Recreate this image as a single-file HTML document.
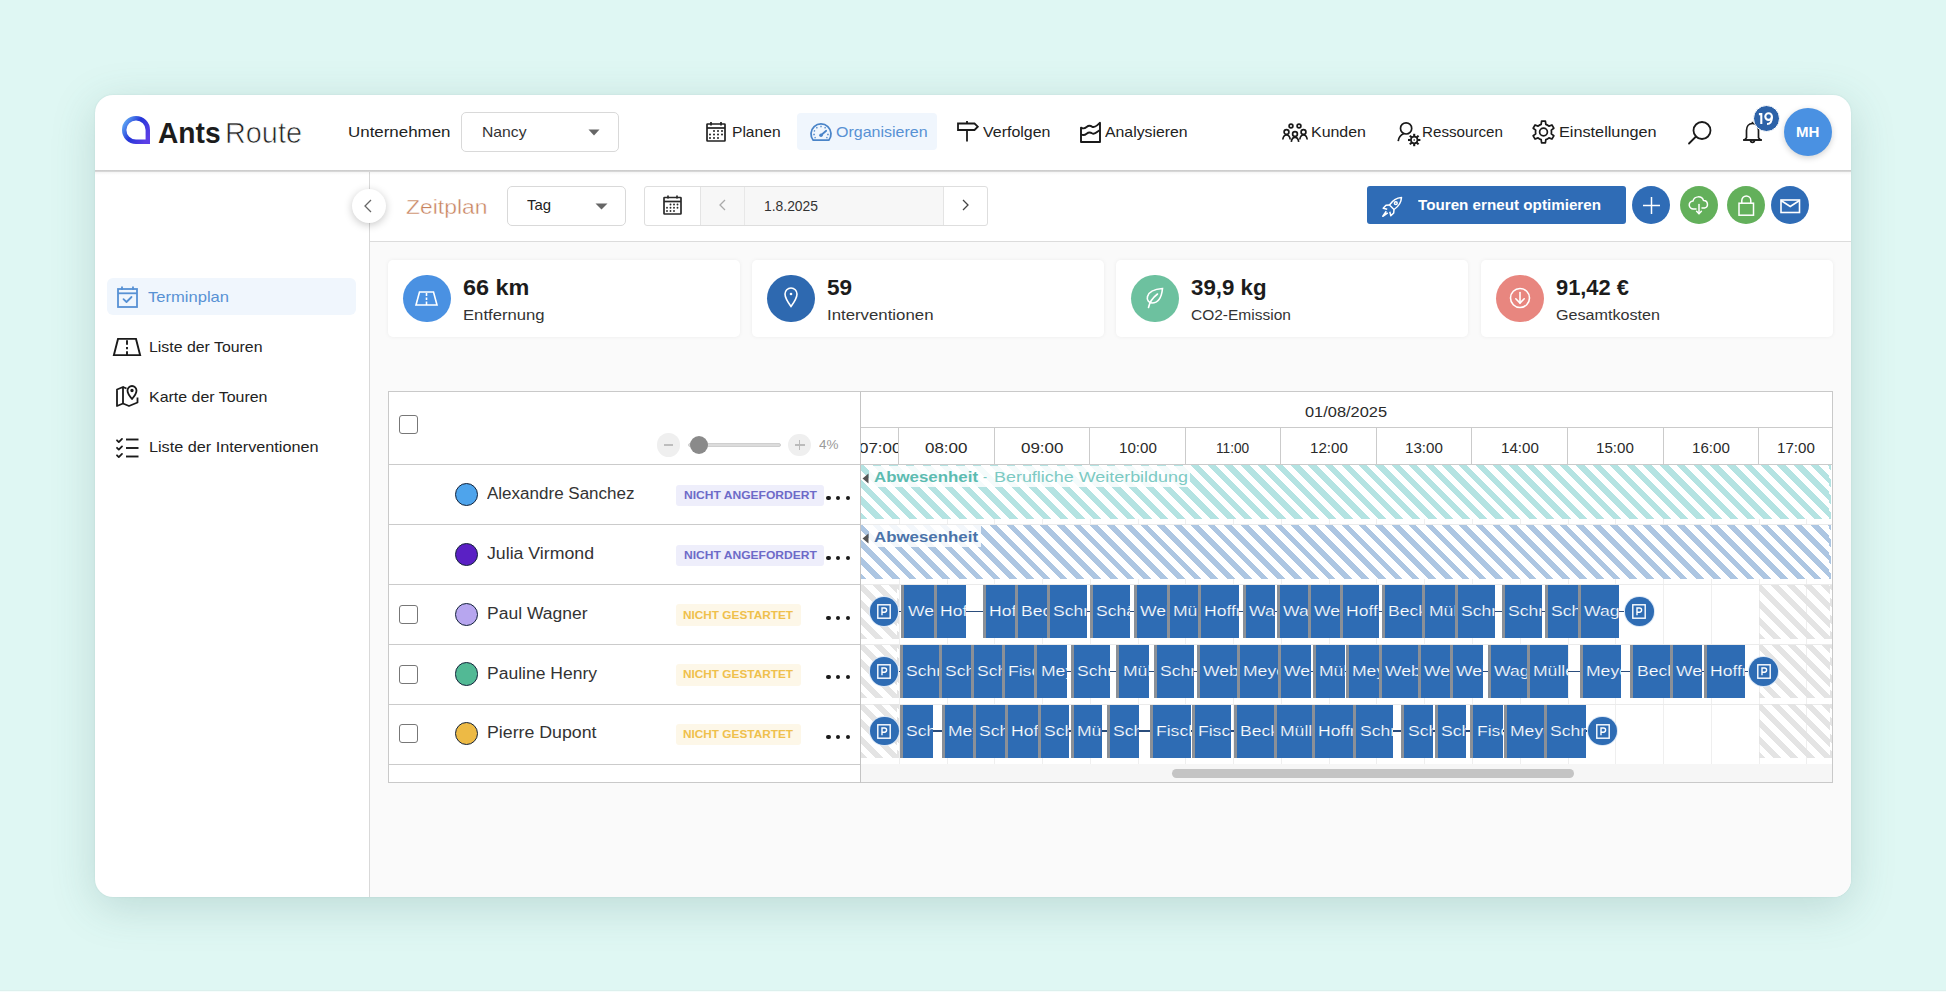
<!DOCTYPE html>
<html><head><meta charset="utf-8"><title>AntsRoute</title>
<style>
*{box-sizing:border-box;margin:0;padding:0}
html,body{width:1946px;height:992px;overflow:hidden}
body{background:#dff7f3;font-family:"Liberation Sans",sans-serif;color:#222;position:relative}
.a{position:absolute}
.t{position:absolute;white-space:nowrap;line-height:1;transform-origin:0 0}
svg.a{overflow:visible}
</style></head><body>

<div class="a" style="left:95px;top:95px;width:1756px;height:802px;background:#fff;border-radius:18px;box-shadow:0 10px 44px rgba(60,115,110,.21),0 0 2px rgba(60,115,110,.12);overflow:hidden"></div>
<div class="a" style="left:370px;top:170px;width:1481px;height:727px;background:#fafafa;border-bottom-right-radius:18px"></div>
<div class="a" style="left:369px;top:170px;width:1px;height:727px;background:#d9d9d9"></div>
<div class="a" style="left:370px;top:170px;width:1481px;height:72px;background:#fff;border-bottom:1px solid #dcdcdc"></div>
<div class="a" style="left:95px;top:170px;width:1756px;height:2px;background:linear-gradient(#c9c9c9,#dcdcdc)"></div>
<div class="a" style="left:95px;top:172px;width:1756px;height:3px;background:linear-gradient(rgba(0,0,0,.045),rgba(0,0,0,0))"></div>
<svg class="a" style="left:121px;top:115px;" width="30" height="30" viewBox="0 0 30 30"><defs><linearGradient id="lg" x1="0" y1="0.2" x2="1" y2="0.8">
<stop offset="0" stop-color="#5aa0f2"/><stop offset=".45" stop-color="#2536d8"/><stop offset="1" stop-color="#5b3fe6"/></linearGradient></defs>
<path d="M15 3.2a11.8 11.8 0 1 0 0 23.6h11.8V15A11.8 11.8 0 0 0 15 3.2z" fill="none" stroke="url(#lg)" stroke-width="4.4" stroke-linejoin="miter"/></svg>
<div class="t" style="left:158.0px;top:119.3px;font-size:29px;color:#1c1c1c;font-weight:bold;transform:scaleX(0.971);">Ants</div>
<div class="t" style="left:225.0px;top:119.3px;font-size:29px;color:#222;transform:scaleX(0.994);-webkit-text-stroke:0.7px #fff">Route</div>
<div class="t" style="left:348.0px;top:124.2px;font-size:15px;color:#222;transform:scaleX(1.128);">Unternehmen</div>
<div class="a" style="left:461px;top:112px;width:158px;height:40px;background:#fff;border:1px solid #d9d9d9;border-radius:5px"></div>
<div class="t" style="left:481.5px;top:124.2px;font-size:15px;color:#333;transform:scaleX(1.048);">Nancy</div>
<svg class="a" style="left:588px;top:129px;" width="12" height="7" viewBox="0 0 12 7"><path d="M0.5 0.5h11l-5.5 6z" fill="#666"/></svg>
<div class="a" style="left:797px;top:113px;width:140px;height:37px;background:#f0f6fd;border-radius:4px"></div>
<svg class="a" style="left:706px;top:121px;" width="20" height="21" viewBox="0 0 20 21"><g fill="none" stroke="#222" stroke-width="1.7"><rect x="1" y="3" width="18" height="17" rx="0.5"/><line x1="1" y1="7" x2="19" y2="7"/>
<line x1="5" y1="1" x2="5" y2="4.5"/><line x1="15" y1="1" x2="15" y2="4.5"/></g>
<g fill="#222"><circle cx="8" cy="10" r="1"/><circle cx="12" cy="10" r="1"/><circle cx="16" cy="10" r="1"/>
<circle cx="4" cy="13.5" r="1"/><circle cx="8" cy="13.5" r="1"/><circle cx="12" cy="13.5" r="1"/><circle cx="16" cy="13.5" r="1"/>
<circle cx="4" cy="17" r="1"/><circle cx="8" cy="17" r="1"/><circle cx="12" cy="17" r="1"/></g></svg>
<div class="t" style="left:732.0px;top:124.1px;font-size:15px;color:#222;transform:scaleX(1.040);">Planen</div>
<svg class="a" style="left:810px;top:122px;" width="22" height="20" viewBox="0 0 22 20"><g fill="none" stroke="#4a84c8" stroke-width="1.8"><path d="M3.2 18.2A10 10 0 1 1 18.8 18.2z" stroke-linejoin="round"/></g>
<g stroke="#4a84c8" stroke-width="1.3"><line x1="11" y1="3.8" x2="11" y2="5.3"/><line x1="6.5" y1="5.2" x2="7.3" y2="6.4"/><line x1="15.5" y1="5.2" x2="14.7" y2="6.4"/>
<line x1="3.8" y1="8.6" x2="5.1" y2="9.3"/><line x1="3.3" y1="12.5" x2="4.8" y2="12.5"/><line x1="17.2" y1="12.5" x2="18.7" y2="12.5"/><line x1="4.5" y1="16" x2="5.7" y2="15.4"/><line x1="17.5" y1="16" x2="16.3" y2="15.4"/></g>
<line x1="11" y1="13.2" x2="16.2" y2="8.8" stroke="#4a84c8" stroke-width="1.8" stroke-linecap="round"/><circle cx="11" cy="13.2" r="1.8" fill="#4a84c8"/></svg>
<div class="t" style="left:836.0px;top:124.1px;font-size:15px;color:#5791d4;transform:scaleX(1.066);">Organisieren</div>
<svg class="a" style="left:957px;top:121px;" width="22" height="21" viewBox="0 0 22 21"><g fill="none" stroke="#1a1a1a" stroke-width="1.8"><path d="M1 2.5h16.5l3.3 3.2-3.3 3.3H1z" stroke-linejoin="miter"/><line x1="10" y1="0" x2="10" y2="2.5"/><line x1="10" y1="9" x2="10" y2="20.5"/></g></svg>
<div class="t" style="left:982.5px;top:124.1px;font-size:15px;color:#222;transform:scaleX(1.064);">Verfolgen</div>
<svg class="a" style="left:1080px;top:122px;" width="22" height="21" viewBox="0 0 22 21"><g fill="none" stroke="#1a1a1a" stroke-width="1.9" stroke-linejoin="round"><path d="M1 5.6c2.2 1.4 3.8 0.9 5.6-0.6s3.4-1.8 5.4-0.4c2 1.2 3.4 0.2 5.4-1.5L20 0.8V20H1z"/>
<path d="M1 12.3c2.2 1.4 3.8 0.9 5.6-0.6s3.4-1.8 5.4-0.4c2 1.2 3.4 0.2 5.4-1.5L20 8"/></g></svg>
<div class="t" style="left:1105.0px;top:124.1px;font-size:15px;color:#222;transform:scaleX(1.054);">Analysieren</div>
<svg class="a" style="left:1282px;top:123px;" width="26" height="20" viewBox="0 0 26 20"><g fill="none" stroke="#1a1a1a" stroke-width="1.7"><circle cx="9" cy="3" r="1.9"/><circle cx="17" cy="3" r="1.9"/>
<circle cx="4.5" cy="9" r="2.4"/><circle cx="21.5" cy="9" r="2.4"/><circle cx="13" cy="11" r="2.4"/>
<path d="M0.8 16.5c0.4-3 2-4.5 3.7-4.5s3.3 1.5 3.7 4.5"/><path d="M17.8 16.5c0.4-3 2-4.5 3.7-4.5s3.3 1.5 3.7 4.5"/><path d="M9.3 18.8c0.4-3 2-4.5 3.7-4.5s3.3 1.5 3.7 4.5"/></g></svg>
<div class="t" style="left:1311.0px;top:123.8px;font-size:15px;color:#222;transform:scaleX(1.063);">Kunden</div>
<svg class="a" style="left:1397px;top:121px;" width="26" height="27" viewBox="0 0 26 27"><g fill="none" stroke="#1a1a1a" stroke-width="1.7"><circle cx="9.1" cy="7.4" r="5.6"/><path d="M1.2 20.1C1.8 16 3.5 13.8 6.6 12.7"/></g>
<g stroke="#1a1a1a" stroke-width="2.1"><line x1="20.60" y1="19.00" x2="23.40" y2="19.00"/><line x1="19.60" y1="21.40" x2="21.58" y2="23.38"/><line x1="17.20" y1="22.40" x2="17.20" y2="25.20"/><line x1="14.80" y1="21.40" x2="12.82" y2="23.38"/><line x1="13.80" y1="19.00" x2="11.00" y2="19.00"/><line x1="14.80" y1="16.60" x2="12.82" y2="14.62"/><line x1="17.20" y1="15.60" x2="17.20" y2="12.80"/><line x1="19.60" y1="16.60" x2="21.58" y2="14.62"/></g><circle cx="17.2" cy="19" r="3.3" fill="#fff" stroke="#1a1a1a" stroke-width="1.7"/><circle cx="17.2" cy="19" r="0.8" fill="#1a1a1a"/></svg>
<div class="t" style="left:1422.0px;top:123.8px;font-size:15px;color:#222;transform:scaleX(1.011);">Ressourcen</div>
<svg class="a" style="left:1531px;top:119px;" width="25" height="26" viewBox="0 0 25 26"><g fill="none" stroke="#1a1a1a" stroke-width="1.7" stroke-linejoin="round"><path d="M10.16 5.35L10.59 2.17L14.41 2.17L14.84 5.35A8.0 8.0 0 0 1 17.96 7.15L20.93 5.93L22.84 9.24L20.29 11.20A8.0 8.0 0 0 1 20.29 14.80L22.84 16.76L20.93 20.07L17.96 18.85A8.0 8.0 0 0 1 14.84 20.65L14.41 23.83L10.59 23.83L10.16 20.65A8.0 8.0 0 0 1 7.04 18.85L4.07 20.07L2.16 16.76L4.71 14.80A8.0 8.0 0 0 1 4.71 11.20L2.16 9.24L4.07 5.93L7.04 7.15A8.0 8.0 0 0 1 10.16 5.35z"/><circle cx="12.5" cy="13" r="3.9"/></g></svg>
<div class="t" style="left:1559.0px;top:124.2px;font-size:15px;color:#222;transform:scaleX(1.083);">Einstellungen</div>
<svg class="a" style="left:1688px;top:121px;" width="24" height="24" viewBox="0 0 24 24"><g fill="none" stroke="#1a1a1a" stroke-width="1.8"><circle cx="14" cy="9.5" r="8.5"/><line x1="8" y1="15.5" x2="1" y2="22.5" stroke-linecap="round"/></g></svg>
<svg class="a" style="left:1742px;top:121px;" width="21" height="24" viewBox="0 0 21 24"><g fill="none" stroke="#1a1a1a" stroke-width="1.7" stroke-linejoin="round"><path d="M10.5 2.5c-3.8 0-6 3-6 7v7.2L2.5 19h16l-2-2.3V9.5c0-4-2.2-7-6-7z"/><path d="M1 19h19"/><path d="M8.6 19.5a1.9 1.9 0 0 0 3.8 0"/><line x1="10.5" y1="0.8" x2="10.5" y2="2.5"/></g></svg>
<div class="a" style="left:1752.5px;top:104.8px;width:27px;height:27px;border-radius:50%;background:#2d62a8;border:1.5px solid #fff"></div>
<svg class="a" style="left:1758px;top:111.5px;" width="16" height="13" viewBox="0 0 16 13"><g fill="none" stroke="#fff" stroke-width="2.1"><path d="M0.9 2.1H3.3V12"/><circle cx="10.6" cy="4.6" r="3.3"/><path d="M13.9 4.8C13.9 9.8 12.4 12 9 12"/></g></svg>
<div class="a" style="left:1784px;top:108px;width:48px;height:48px;border-radius:50%;background:#4a91e2;box-shadow:0 2px 6px rgba(0,0,0,.18)"></div>
<div class="t" style="left:1796.0px;top:125.3px;font-size:14px;color:#fff;font-weight:bold;transform:scaleX(1.076);">MH</div>
<div class="a" style="left:107px;top:278px;width:249px;height:37px;background:#f0f6fd;border-radius:6px"></div>
<svg class="a" style="left:117px;top:286px;" width="21" height="22" viewBox="0 0 21 22"><g fill="none" stroke="#5791d4" stroke-width="1.8"><rect x="1" y="3" width="19" height="18"/><line x1="1" y1="7.3" x2="20" y2="7.3"/><line x1="5" y1="0.5" x2="5" y2="4"/><line x1="16" y1="0.5" x2="16" y2="4"/>
<path d="M6.5 13.2l3 2.8 5-5" stroke-linecap="round" stroke-linejoin="round"/></g></svg>
<div class="t" style="left:148.0px;top:289.2px;font-size:15px;color:#5791d4;transform:scaleX(1.104);">Terminplan</div>
<svg class="a" style="left:113px;top:338px;" width="28" height="18" viewBox="0 0 28 18"><g fill="none" stroke="#1a1a1a" stroke-width="1.9" stroke-linejoin="miter"><path d="M5.0 0.9H23.0L27.1 17.1H0.9z"/>
<line x1="14.0" y1="2.2" x2="14.0" y2="6.8"/><line x1="14.0" y1="9.0" x2="14.0" y2="11.2"/><line x1="14.0" y1="13.3" x2="14.0" y2="18.0"/></g></svg>
<div class="t" style="left:148.5px;top:339.2px;font-size:15px;color:#222;transform:scaleX(1.058);">Liste der Touren</div>
<svg class="a" style="left:116px;top:385px;" width="23" height="22" viewBox="0 0 23 22"><g fill="none" stroke="#1a1a1a" stroke-width="1.8" stroke-linejoin="round"><path d="M1 4.5l6-2.5v16.5l-6 2.5z"/><path d="M7 2l3.5 1.5"/><path d="M7 18.5l6 2.5 8.5-3.5v-5"/>
<path d="M16 1a4.5 4.5 0 0 0-4.5 4.5c0 3.2 4.5 8.5 4.5 8.5s4.5-5.3 4.5-8.5A4.5 4.5 0 0 0 16 1z"/><circle cx="16" cy="5.5" r="0.8" fill="#1a1a1a"/></g></svg>
<div class="t" style="left:148.5px;top:388.8px;font-size:15px;color:#222;transform:scaleX(1.063);">Karte der Touren</div>
<svg class="a" style="left:116px;top:438px;" width="23" height="20" viewBox="0 0 23 20"><g fill="none" stroke="#1a1a1a" stroke-width="1.8" stroke-linecap="round" stroke-linejoin="round"><path d="M1 2.3l1.8 1.8 3.2-3.2"/><path d="M1 9.8l1.8 1.8 3.2-3.2"/><path d="M1 17.3l1.8 1.8 3.2-3.2"/></g>
<g stroke="#1a1a1a" stroke-width="1.9"><line x1="10" y1="1.5" x2="22.5" y2="1.5"/><line x1="10" y1="10" x2="22.5" y2="10"/><line x1="10" y1="18.5" x2="22.5" y2="18.5"/></g></svg>
<div class="t" style="left:148.5px;top:438.8px;font-size:15px;color:#222;transform:scaleX(1.081);">Liste der Interventionen</div>
<div class="a" style="left:352px;top:189px;width:34px;height:34px;border-radius:50%;background:#fff;box-shadow:0 2px 9px rgba(0,0,0,.22)"></div>
<svg class="a" style="left:363px;top:199px;" width="10" height="14" viewBox="0 0 10 14"><path d="M8 1L2 7l6 6" fill="none" stroke="#666" stroke-width="1.3"/></svg>
<div class="t" style="left:406.0px;top:196.2px;font-size:21px;color:#c7825d;transform:scaleX(1.090);-webkit-text-stroke:0.4px #fff">Zeitplan</div>
<div class="a" style="left:507px;top:186px;width:119px;height:40px;background:#fff;border:1px solid #d9d9d9;border-radius:5px"></div>
<div class="t" style="left:526.5px;top:197.2px;font-size:15px;color:#222;transform:scaleX(0.994);">Tag</div>
<svg class="a" style="left:595px;top:203px;" width="13" height="7" viewBox="0 0 13 7"><path d="M0.5 0.5h12l-6 6z" fill="#666"/></svg>
<div class="a" style="left:644px;top:186px;width:344px;height:40px;background:#fff;border:1px solid #dedede;border-radius:3px"></div>
<div class="a" style="left:701px;top:187px;width:242px;height:38px;background:#f7f7f7"></div>
<div class="a" style="left:700px;top:187px;width:1px;height:38px;background:#e4e4e4"></div>
<div class="a" style="left:744px;top:187px;width:1px;height:38px;background:#e8e8e8"></div>
<div class="a" style="left:943px;top:187px;width:1px;height:38px;background:#e4e4e4"></div>
<svg class="a" style="left:663px;top:195px;" width="19" height="20" viewBox="0 0 19 20"><g fill="none" stroke="#2a2a2a" stroke-width="1.7"><rect x="1" y="2.5" width="17" height="16.5" rx="0.5"/><line x1="1" y1="6.5" x2="18" y2="6.5"/><line x1="5" y1="0.5" x2="5" y2="3.5"/><line x1="14" y1="0.5" x2="14" y2="3.5"/></g>
<g fill="#2a2a2a"><circle cx="7.5" cy="9.5" r=".95"/><circle cx="11" cy="9.5" r=".95"/><circle cx="14.5" cy="9.5" r=".95"/><circle cx="4" cy="12.8" r=".95"/><circle cx="7.5" cy="12.8" r=".95"/><circle cx="11" cy="12.8" r=".95"/><circle cx="14.5" cy="12.8" r=".95"/><circle cx="4" cy="16" r=".95"/><circle cx="7.5" cy="16" r=".95"/><circle cx="11" cy="16" r=".95"/></g></svg>
<svg class="a" style="left:718px;top:199px;" width="9" height="12" viewBox="0 0 9 12"><path d="M7 1L2 6l5 5" fill="none" stroke="#aaa" stroke-width="1.3"/></svg>
<div class="t" style="left:764.0px;top:197.8px;font-size:15px;color:#333;transform:scaleX(0.925);">1.8.2025</div>
<svg class="a" style="left:961px;top:199px;" width="9" height="12" viewBox="0 0 9 12"><path d="M2 1l5 5-5 5" fill="none" stroke="#444" stroke-width="1.3"/></svg>
<div class="a" style="left:1367px;top:186px;width:259px;height:38px;background:#2f6cb6;border-radius:3px"></div>
<svg class="a" style="left:1381px;top:196px;" width="22" height="22" viewBox="0 0 22 22"><g fill="none" stroke="#fff" stroke-width="1.5" stroke-linejoin="round"><path d="M20.5 1.5c-5 0.3-9 3-12 7.5l4.5 4.5c4.5-3 7.2-7 7.5-12z"/><circle cx="14.8" cy="7.2" r="1.4"/>
<path d="M8.5 9L5 9.3 2.2 12.2l4 1"/><path d="M13 13.5L12.7 17 9.8 19.8l-1-4"/><path d="M5.3 15.3l-3.5 5 5-3.5"/></g></svg>
<div class="t" style="left:1418.0px;top:198.3px;font-size:14px;color:#fff;font-weight:bold;transform:scaleX(1.086);">Touren erneut optimieren</div>
<div class="a" style="left:1632.3px;top:186.4px;width:38px;height:38px;border-radius:50%;background:#2f6cb6;"></div>
<svg class="a" style="left:1642px;top:196px;" width="19" height="19" viewBox="0 0 19 19"><g stroke="#fff" stroke-width="1.5"><line x1="1" y1="9.5" x2="18" y2="9.5"/><line x1="9.5" y1="1" x2="9.5" y2="18"/></g></svg>
<div class="a" style="left:1679.8px;top:186.4px;width:38px;height:38px;border-radius:50%;background:#63b05b;"></div>
<svg class="a" style="left:1688px;top:196px;" width="22" height="20" viewBox="0 0 22 20"><g fill="none" stroke="#fff" stroke-width="1.5" stroke-linejoin="round" stroke-linecap="round"><path d="M8 13H5.5a4 4 0 0 1-0.5-8a5.5 5.5 0 0 1 10.5-0.5a3.8 3.8 0 0 1 1 7.5 H14"/>
<line x1="11" y1="8.5" x2="11" y2="17.5"/><path d="M8.6 15.3l2.4 2.4 2.4-2.4"/></g></svg>
<div class="a" style="left:1727.0px;top:186.4px;width:38px;height:38px;border-radius:50%;background:#63b05b;"></div>
<svg class="a" style="left:1738px;top:195px;" width="17" height="22" viewBox="0 0 17 22"><g fill="none" stroke="#fff" stroke-width="1.5"><rect x="1" y="8.2" width="14.5" height="12"/><path d="M3.8 8.2V5.5a4.5 4.5 0 0 1 9 0v2.7"/></g></svg>
<div class="a" style="left:1771.0px;top:186.4px;width:38px;height:38px;border-radius:50%;background:#2f6cb6;"></div>
<svg class="a" style="left:1780px;top:199px;" width="21" height="15" viewBox="0 0 21 15"><g fill="none" stroke="#fff" stroke-width="1.6"><rect x="1" y="1" width="18.5" height="12.5"/><path d="M1 1.5l9.25 6 9.25-6"/></g></svg>
<div class="a" style="left:388px;top:260px;width:352px;height:77px;background:#fff;border-radius:5px;box-shadow:0 0 4px rgba(0,0,0,.06)"></div>
<div class="a" style="left:403.1px;top:274.6px;width:47.5px;height:47.5px;border-radius:50%;background:#4a91e2;"></div>
<svg class="a" style="left:415.4px;top:290.9px;" width="23" height="15" viewBox="0 0 23 15"><g fill="none" stroke="#fff" stroke-width="1.6"><path d="M4.5 1h14l3.5 13H1z"/><line x1="11.5" y1="2" x2="11.5" y2="5"/><line x1="11.5" y1="6.5" x2="11.5" y2="9"/><line x1="11.5" y1="10.5" x2="11.5" y2="14"/></g></svg>
<div class="t" style="left:462.5px;top:277.1px;font-size:22px;color:#1c1c1c;font-weight:bold;transform:scaleX(1.064);">66 km</div>
<div class="t" style="left:462.8px;top:307.6px;font-size:14px;color:#333;transform:scaleX(1.190);">Entfernung</div>
<div class="a" style="left:752px;top:260px;width:352px;height:77px;background:#fff;border-radius:5px;box-shadow:0 0 4px rgba(0,0,0,.06)"></div>
<div class="a" style="left:767.1px;top:274.6px;width:47.5px;height:47.5px;border-radius:50%;background:#2e69b0;"></div>
<svg class="a" style="left:783.9px;top:287.4px;" width="14" height="21" viewBox="0 0 14 21"><g fill="none" stroke="#fff" stroke-width="1.6"><path d="M7 1a6 6 0 0 0-6 6c0 4.3 6 12.5 6 12.5s6-8.2 6-12.5a6 6 0 0 0-6-6z"/><circle cx="7" cy="7" r="1.3" fill="#fff" stroke="none"/></g></svg>
<div class="t" style="left:826.5px;top:277.1px;font-size:22px;color:#1c1c1c;font-weight:bold;transform:scaleX(1.024);">59</div>
<div class="t" style="left:826.8px;top:307.6px;font-size:14px;color:#333;transform:scaleX(1.200);">Interventionen</div>
<div class="a" style="left:1116px;top:260px;width:352px;height:77px;background:#fff;border-radius:5px;box-shadow:0 0 4px rgba(0,0,0,.06)"></div>
<div class="a" style="left:1131.2px;top:274.6px;width:47.5px;height:47.5px;border-radius:50%;background:#6dc19f;"></div>
<svg class="a" style="left:1144.4px;top:287.4px;" width="21" height="22" viewBox="0 0 21 22"><g fill="none" stroke="#fff" stroke-width="1.6" stroke-linecap="round"><path d="M18.5 1.5C12 2 5 4 3.5 9.5c-1 3.5 1.5 6.5 4.5 6.5 5.5 0 9.5-4.5 10.5-14.5z"/><path d="M13.5 7C9 10.5 5.5 15 4.5 20.5"/></g></svg>
<div class="t" style="left:1190.5px;top:277.1px;font-size:22px;color:#1c1c1c;font-weight:bold;transform:scaleX(1.012);">39,9 kg</div>
<div class="t" style="left:1190.8px;top:307.6px;font-size:14px;color:#333;transform:scaleX(1.107);">CO2-Emission</div>
<div class="a" style="left:1481px;top:260px;width:352px;height:77px;background:#fff;border-radius:5px;box-shadow:0 0 4px rgba(0,0,0,.06)"></div>
<div class="a" style="left:1496.2px;top:274.6px;width:47.5px;height:47.5px;border-radius:50%;background:#e8867f;"></div>
<svg class="a" style="left:1508.9px;top:287.4px;" width="22" height="22" viewBox="0 0 22 22"><g fill="none" stroke="#fff" stroke-width="1.6" stroke-linecap="round"><circle cx="11" cy="11" r="9.5"/><line x1="11" y1="5.5" x2="11" y2="16"/><path d="M6.8 11.8L11 16l4.2-4.2"/></g></svg>
<div class="t" style="left:1555.5px;top:277.1px;font-size:22px;color:#1c1c1c;font-weight:bold;transform:scaleX(0.993);">91,42 €</div>
<div class="t" style="left:1555.8px;top:307.6px;font-size:14px;color:#333;transform:scaleX(1.152);">Gesamtkosten</div>
<div class="a" style="left:388px;top:391px;width:1445px;height:392px;background:#fff;border:1px solid #c9c9c9"></div>
<div class="a" style="left:898.7px;top:464.5px;width:1px;height:299.0px;background:#efefef"></div>
<div class="a" style="left:946.5px;top:464.5px;width:1px;height:299.0px;background:#efefef"></div>
<div class="a" style="left:994.2px;top:464.5px;width:1px;height:299.0px;background:#efefef"></div>
<div class="a" style="left:1042.0px;top:464.5px;width:1px;height:299.0px;background:#efefef"></div>
<div class="a" style="left:1089.8px;top:464.5px;width:1px;height:299.0px;background:#efefef"></div>
<div class="a" style="left:1137.6px;top:464.5px;width:1px;height:299.0px;background:#efefef"></div>
<div class="a" style="left:1185.3px;top:464.5px;width:1px;height:299.0px;background:#efefef"></div>
<div class="a" style="left:1233.1px;top:464.5px;width:1px;height:299.0px;background:#efefef"></div>
<div class="a" style="left:1280.9px;top:464.5px;width:1px;height:299.0px;background:#efefef"></div>
<div class="a" style="left:1328.6px;top:464.5px;width:1px;height:299.0px;background:#efefef"></div>
<div class="a" style="left:1376.4px;top:464.5px;width:1px;height:299.0px;background:#efefef"></div>
<div class="a" style="left:1424.2px;top:464.5px;width:1px;height:299.0px;background:#efefef"></div>
<div class="a" style="left:1471.9px;top:464.5px;width:1px;height:299.0px;background:#efefef"></div>
<div class="a" style="left:1519.7px;top:464.5px;width:1px;height:299.0px;background:#efefef"></div>
<div class="a" style="left:1567.5px;top:464.5px;width:1px;height:299.0px;background:#efefef"></div>
<div class="a" style="left:1615.2px;top:464.5px;width:1px;height:299.0px;background:#efefef"></div>
<div class="a" style="left:1663.0px;top:464.5px;width:1px;height:299.0px;background:#efefef"></div>
<div class="a" style="left:1710.8px;top:464.5px;width:1px;height:299.0px;background:#efefef"></div>
<div class="a" style="left:1758.6px;top:464.5px;width:1px;height:299.0px;background:#efefef"></div>
<div class="a" style="left:1806.3px;top:464.5px;width:1px;height:299.0px;background:#efefef"></div>
<div class="a" style="left:860.3px;top:524.3px;width:972.2px;height:1px;background:#ebebeb"></div>
<div class="a" style="left:860.3px;top:584.2px;width:972.2px;height:1px;background:#ebebeb"></div>
<div class="a" style="left:860.3px;top:643.8px;width:972.2px;height:1px;background:#ebebeb"></div>
<div class="a" style="left:860.3px;top:703.5px;width:972.2px;height:1px;background:#ebebeb"></div>
<div class="a" style="left:860.3px;top:763.5px;width:972.2px;height:1px;background:#ebebeb"></div>
<div class="a" style="left:388.5px;top:524.3px;width:471.79999999999995px;height:1px;background:#cbcbcb"></div>
<div class="a" style="left:388.5px;top:584.2px;width:471.79999999999995px;height:1px;background:#cbcbcb"></div>
<div class="a" style="left:388.5px;top:643.8px;width:471.79999999999995px;height:1px;background:#cbcbcb"></div>
<div class="a" style="left:388.5px;top:703.5px;width:471.79999999999995px;height:1px;background:#cbcbcb"></div>
<div class="a" style="left:388.5px;top:763.5px;width:471.79999999999995px;height:1px;background:#cbcbcb"></div>
<div class="a" style="left:860.3px;top:427px;width:972.2px;height:1px;background:#cbcbcb"></div>
<div class="a" style="left:388.5px;top:464px;width:1444.0px;height:1px;background:#cbcbcb"></div>
<div class="a" style="left:860px;top:391.5px;width:1px;height:391px;background:#c4c4c4"></div>
<div class="a" style="left:898.2px;top:427.5px;width:1px;height:37px;background:#cbcbcb"></div>
<div class="a" style="left:993.7px;top:427.5px;width:1px;height:37px;background:#cbcbcb"></div>
<div class="a" style="left:1089.3px;top:427.5px;width:1px;height:37px;background:#cbcbcb"></div>
<div class="a" style="left:1184.8px;top:427.5px;width:1px;height:37px;background:#cbcbcb"></div>
<div class="a" style="left:1280.4px;top:427.5px;width:1px;height:37px;background:#cbcbcb"></div>
<div class="a" style="left:1375.9px;top:427.5px;width:1px;height:37px;background:#cbcbcb"></div>
<div class="a" style="left:1471.4px;top:427.5px;width:1px;height:37px;background:#cbcbcb"></div>
<div class="a" style="left:1567.0px;top:427.5px;width:1px;height:37px;background:#cbcbcb"></div>
<div class="a" style="left:1662.5px;top:427.5px;width:1px;height:37px;background:#cbcbcb"></div>
<div class="a" style="left:1758.1px;top:427.5px;width:1px;height:37px;background:#cbcbcb"></div>
<div class="a" style="left:860.8px;top:428px;width:37.4px;height:36px;overflow:hidden"><div class="t" style="left:-2.2px;top:11.9px;font-size:15px;color:#2a2a2a;transform:scaleX(1.131)">07:00</div></div>
<div class="a" style="left:898.7px;top:428px;width:95.0px;height:36px;overflow:hidden"><div class="t" style="left:26.6px;top:11.9px;font-size:15px;color:#2a2a2a;transform:scaleX(1.131)">08:00</div></div>
<div class="a" style="left:994.2px;top:428px;width:95.0px;height:36px;overflow:hidden"><div class="t" style="left:26.6px;top:11.9px;font-size:15px;color:#2a2a2a;transform:scaleX(1.131)">09:00</div></div>
<div class="a" style="left:1089.8px;top:428px;width:95.0px;height:36px;overflow:hidden"><div class="t" style="left:28.9px;top:11.9px;font-size:15px;color:#2a2a2a;transform:scaleX(1.008)">10:00</div></div>
<div class="a" style="left:1185.3px;top:428px;width:95.0px;height:36px;overflow:hidden"><div class="t" style="left:31.2px;top:11.9px;font-size:15px;color:#2a2a2a;transform:scaleX(0.911)">11:00</div></div>
<div class="a" style="left:1280.9px;top:428px;width:95.0px;height:36px;overflow:hidden"><div class="t" style="left:28.9px;top:11.9px;font-size:15px;color:#2a2a2a;transform:scaleX(1.008)">12:00</div></div>
<div class="a" style="left:1376.4px;top:428px;width:95.0px;height:36px;overflow:hidden"><div class="t" style="left:28.9px;top:11.9px;font-size:15px;color:#2a2a2a;transform:scaleX(1.008)">13:00</div></div>
<div class="a" style="left:1471.9px;top:428px;width:95.0px;height:36px;overflow:hidden"><div class="t" style="left:28.9px;top:11.9px;font-size:15px;color:#2a2a2a;transform:scaleX(1.008)">14:00</div></div>
<div class="a" style="left:1567.5px;top:428px;width:95.0px;height:36px;overflow:hidden"><div class="t" style="left:28.9px;top:11.9px;font-size:15px;color:#2a2a2a;transform:scaleX(1.008)">15:00</div></div>
<div class="a" style="left:1663.0px;top:428px;width:95.0px;height:36px;overflow:hidden"><div class="t" style="left:28.9px;top:11.9px;font-size:15px;color:#2a2a2a;transform:scaleX(1.008)">16:00</div></div>
<div class="a" style="left:1758.6px;top:428px;width:73.4px;height:36px;overflow:hidden"><div class="t" style="left:18.1px;top:11.9px;font-size:15px;color:#2a2a2a;transform:scaleX(1.008)">17:00</div></div>
<div class="t" style="left:1305.0px;top:403.9px;font-size:15px;color:#2a2a2a;transform:scaleX(1.093);">01/08/2025</div>
<div class="a" style="left:398.5px;top:415px;width:19px;height:19px;border:1.6px solid #777;border-radius:3px;background:#fff"></div>
<div class="a" style="left:656.5px;top:433.2px;width:23.5px;height:23.5px;border-radius:50%;background:#efefef;"></div>
<div class="a" style="left:664px;top:444.3px;width:9px;height:1.4px;background:#bdbdbd"></div>
<div class="a" style="left:687.5px;top:443.3px;width:93.5px;height:4px;background:#dcdcdc;border-radius:2px;border:0.5px solid #cfcfcf"></div>
<div class="a" style="left:689.5px;top:435.8px;width:18.5px;height:18.5px;border-radius:50%;background:#8a8a8a;"></div>
<div class="a" style="left:788.2px;top:433.8px;width:22.5px;height:22.5px;border-radius:50%;background:#efefef;"></div>
<div class="a" style="left:794.5px;top:444.3px;width:10px;height:1.3px;background:#bbb"></div>
<div class="a" style="left:798.8px;top:439.5px;width:1.3px;height:10px;background:#bbb"></div>
<div class="t" style="left:818.5px;top:438.4px;font-size:13px;color:#9a9a9a;transform:scaleX(1.034);">4%</div>
<div class="a" style="left:454.8px;top:482.9px;width:23.6px;height:23.6px;border-radius:50%;background:#4ea4ec;border:1.6px solid #14233a"></div>
<div class="t" style="left:487.2px;top:486.3px;font-size:16px;color:#333;transform:scaleX(1.063);">Alexandre Sanchez</div>
<div class="a" style="left:676px;top:484.8px;width:148px;height:21.5px;background:#eeeefb;border-radius:3px"></div>
<div class="t" style="left:683.5px;top:490.0px;font-size:11.5px;color:#6d6ac8;font-weight:bold;transform:scaleX(1.049);">NICHT ANGEFORDERT</div>
<div class="a" style="left:826.4px;top:496.2px;width:4.2px;height:4.2px;border-radius:50%;background:#1a1a1a;"></div>
<div class="a" style="left:836.1px;top:496.2px;width:4.2px;height:4.2px;border-radius:50%;background:#1a1a1a;"></div>
<div class="a" style="left:845.8px;top:496.2px;width:4.2px;height:4.2px;border-radius:50%;background:#1a1a1a;"></div>
<div class="a" style="left:454.8px;top:542.7px;width:23.6px;height:23.6px;border-radius:50%;background:#5a20c4;border:1.6px solid #14233a"></div>
<div class="t" style="left:487.2px;top:546.1px;font-size:16px;color:#333;transform:scaleX(1.107);">Julia Virmond</div>
<div class="a" style="left:676px;top:544.5999999999999px;width:148px;height:21.5px;background:#eeeefb;border-radius:3px"></div>
<div class="t" style="left:683.5px;top:549.8px;font-size:11.5px;color:#6d6ac8;font-weight:bold;transform:scaleX(1.049);">NICHT ANGEFORDERT</div>
<div class="a" style="left:826.4px;top:556.0px;width:4.2px;height:4.2px;border-radius:50%;background:#1a1a1a;"></div>
<div class="a" style="left:836.1px;top:556.0px;width:4.2px;height:4.2px;border-radius:50%;background:#1a1a1a;"></div>
<div class="a" style="left:845.8px;top:556.0px;width:4.2px;height:4.2px;border-radius:50%;background:#1a1a1a;"></div>
<div class="a" style="left:398.5px;top:605.1000000000001px;width:19px;height:19px;border:1.6px solid #777;border-radius:3px;background:#fff"></div>
<div class="a" style="left:454.8px;top:602.6px;width:23.6px;height:23.6px;border-radius:50%;background:#b7a6ef;border:1.6px solid #14233a"></div>
<div class="t" style="left:487.2px;top:606.0px;font-size:16px;color:#333;transform:scaleX(1.094);">Paul Wagner</div>
<div class="a" style="left:675.5px;top:604.4000000000001px;width:125px;height:21.8px;background:#fdf7e8;border-radius:3px"></div>
<div class="t" style="left:683.2px;top:609.7px;font-size:11.5px;color:#efc04c;font-weight:bold;transform:scaleX(1.027);">NICHT GESTARTET</div>
<div class="a" style="left:826.4px;top:615.7px;width:4.2px;height:4.2px;border-radius:50%;background:#1a1a1a;"></div>
<div class="a" style="left:836.1px;top:615.7px;width:4.2px;height:4.2px;border-radius:50%;background:#1a1a1a;"></div>
<div class="a" style="left:845.8px;top:615.7px;width:4.2px;height:4.2px;border-radius:50%;background:#1a1a1a;"></div>
<div class="a" style="left:398.5px;top:664.7px;width:19px;height:19px;border:1.6px solid #777;border-radius:3px;background:#fff"></div>
<div class="a" style="left:454.8px;top:662.2px;width:23.6px;height:23.6px;border-radius:50%;background:#52b995;border:1.6px solid #14233a"></div>
<div class="t" style="left:487.2px;top:665.6px;font-size:16px;color:#333;transform:scaleX(1.095);">Pauline Henry</div>
<div class="a" style="left:675.5px;top:664.0px;width:125px;height:21.8px;background:#fdf7e8;border-radius:3px"></div>
<div class="t" style="left:683.2px;top:669.3px;font-size:11.5px;color:#efc04c;font-weight:bold;transform:scaleX(1.027);">NICHT GESTARTET</div>
<div class="a" style="left:826.4px;top:675.3px;width:4.2px;height:4.2px;border-radius:50%;background:#1a1a1a;"></div>
<div class="a" style="left:836.1px;top:675.3px;width:4.2px;height:4.2px;border-radius:50%;background:#1a1a1a;"></div>
<div class="a" style="left:845.8px;top:675.3px;width:4.2px;height:4.2px;border-radius:50%;background:#1a1a1a;"></div>
<div class="a" style="left:398.5px;top:724.4000000000001px;width:19px;height:19px;border:1.6px solid #777;border-radius:3px;background:#fff"></div>
<div class="a" style="left:454.8px;top:721.9px;width:23.6px;height:23.6px;border-radius:50%;background:#edba45;border:1.6px solid #14233a"></div>
<div class="t" style="left:487.2px;top:725.3px;font-size:16px;color:#333;transform:scaleX(1.109);">Pierre Dupont</div>
<div class="a" style="left:675.5px;top:723.7px;width:125px;height:21.8px;background:#fdf7e8;border-radius:3px"></div>
<div class="t" style="left:683.2px;top:729.0px;font-size:11.5px;color:#efc04c;font-weight:bold;transform:scaleX(1.027);">NICHT GESTARTET</div>
<div class="a" style="left:826.4px;top:735.0px;width:4.2px;height:4.2px;border-radius:50%;background:#1a1a1a;"></div>
<div class="a" style="left:836.1px;top:735.0px;width:4.2px;height:4.2px;border-radius:50%;background:#1a1a1a;"></div>
<div class="a" style="left:845.8px;top:735.0px;width:4.2px;height:4.2px;border-radius:50%;background:#1a1a1a;"></div>
<div class="a" style="left:861.0px;top:465.3px;width:969.5px;height:54.0px;background:repeating-linear-gradient(45deg,#b4e3e2 0 5.9px,#fff 5.9px 11.85px);background-position:-2px 0;"></div>
<div class="a" style="left:861.0px;top:525.1px;width:969.5px;height:54.0px;background:repeating-linear-gradient(45deg,#adc6e2 0 5.4px,#fff 5.4px 11.85px);background-position:-2px 0;"></div>
<div class="a" style="left:869px;top:465.5px;width:321px;height:21.5px;background:rgba(255,255,255,.85)"></div>
<div class="a" style="left:869px;top:525.3px;width:112px;height:21.5px;background:rgba(255,255,255,.85)"></div>
<svg class="a" style="left:862px;top:473.0px;" width="7" height="11" viewBox="0 0 7 11"><path d="M6.5 0.5v10L0.5 5.5z" fill="#555"/></svg>
<svg class="a" style="left:862px;top:532.8px;" width="7" height="11" viewBox="0 0 7 11"><path d="M6.5 0.5v10L0.5 5.5z" fill="#555"/></svg>
<div class="t" style="left:873.6px;top:468.9px;font-size:15px;color:#5cbbb1;font-weight:bold;transform:scaleX(1.124);">Abwesenheit</div>
<div class="t" style="left:983.0px;top:468.9px;font-size:15px;color:#7ccac3;transform:scaleX(0.808);">-</div>
<div class="t" style="left:993.7px;top:468.9px;font-size:15px;color:#7ccac3;transform:scaleX(1.195);">Berufliche Weiterbildung</div>
<div class="t" style="left:873.6px;top:528.8px;font-size:15px;color:#4a73a9;font-weight:bold;transform:scaleX(1.124);">Abwesenheit</div>
<div class="a" style="left:861.0px;top:585.0px;width:37.7px;height:53.5px;background:repeating-linear-gradient(45deg,#e4e4e4 0 5.8px,rgba(255,255,255,0) 5.8px 11.85px);background-position:-2px 0;"></div>
<div class="a" style="left:1759.1px;top:585.0px;width:72.9px;height:53.5px;background:repeating-linear-gradient(45deg,#e4e4e4 0 5.8px,rgba(255,255,255,0) 5.8px 11.85px);background-position:-2px 0;"></div>
<div class="a" style="left:861.0px;top:644.6px;width:37.7px;height:53.5px;background:repeating-linear-gradient(45deg,#e4e4e4 0 5.8px,rgba(255,255,255,0) 5.8px 11.85px);background-position:-2px 0;"></div>
<div class="a" style="left:1759.1px;top:644.6px;width:72.9px;height:53.5px;background:repeating-linear-gradient(45deg,#e4e4e4 0 5.8px,rgba(255,255,255,0) 5.8px 11.85px);background-position:-2px 0;"></div>
<div class="a" style="left:861.0px;top:704.3px;width:37.7px;height:53.5px;background:repeating-linear-gradient(45deg,#e4e4e4 0 5.8px,rgba(255,255,255,0) 5.8px 11.85px);background-position:-2px 0;"></div>
<div class="a" style="left:1759.1px;top:704.3px;width:72.9px;height:53.5px;background:repeating-linear-gradient(45deg,#e4e4e4 0 5.8px,rgba(255,255,255,0) 5.8px 11.85px);background-position:-2px 0;"></div>
<div class="a" style="left:884.2px;top:610.9000000000001px;width:755.0999999999999px;height:1.6px;background:#2b4d7c"></div>
<div class="a" style="left:901.4px;top:585.2px;width:32.8px;height:53px;background:#2e6cb4;border-left:3.4px solid #8b9097;overflow:hidden"><div class="t" style="left:3.2px;top:18.2px;font-size:15px;color:#fff;-webkit-text-stroke:0.2px #2e6cb4;transform:scaleX(1.17)">Weber</div></div>
<div class="a" style="left:933.5px;top:585.2px;width:32.9px;height:53px;background:#2e6cb4;border-left:3.4px solid #8b9097;overflow:hidden"><div class="t" style="left:3.2px;top:18.2px;font-size:15px;color:#fff;-webkit-text-stroke:0.2px #2e6cb4;transform:scaleX(1.17)">Hoffmann</div></div>
<div class="a" style="left:983.0px;top:585.2px;width:32.8px;height:53px;background:#2e6cb4;border-left:3.4px solid #8b9097;overflow:hidden"><div class="t" style="left:3.2px;top:18.2px;font-size:15px;color:#fff;-webkit-text-stroke:0.2px #2e6cb4;transform:scaleX(1.17)">Hoffmann</div></div>
<div class="a" style="left:1015.1px;top:585.2px;width:32.8px;height:53px;background:#2e6cb4;border-left:3.4px solid #8b9097;overflow:hidden"><div class="t" style="left:3.2px;top:18.2px;font-size:15px;color:#fff;-webkit-text-stroke:0.2px #2e6cb4;transform:scaleX(1.17)">Becker</div></div>
<div class="a" style="left:1047.2px;top:585.2px;width:39.9px;height:53px;background:#2e6cb4;border-left:3.4px solid #8b9097;overflow:hidden"><div class="t" style="left:3.2px;top:18.2px;font-size:15px;color:#fff;-webkit-text-stroke:0.2px #2e6cb4;transform:scaleX(1.17)">Schröder</div></div>
<div class="a" style="left:1090.0px;top:585.2px;width:39.5px;height:53px;background:#2e6cb4;border-left:3.4px solid #8b9097;overflow:hidden"><div class="t" style="left:3.2px;top:18.2px;font-size:15px;color:#fff;-webkit-text-stroke:0.2px #2e6cb4;transform:scaleX(1.17)">Schäfer</div></div>
<div class="a" style="left:1134.1px;top:585.2px;width:33.2px;height:53px;background:#2e6cb4;border-left:3.4px solid #8b9097;overflow:hidden"><div class="t" style="left:3.2px;top:18.2px;font-size:15px;color:#fff;-webkit-text-stroke:0.2px #2e6cb4;transform:scaleX(1.17)">Weber</div></div>
<div class="a" style="left:1166.6px;top:585.2px;width:31.9px;height:53px;background:#2e6cb4;border-left:3.4px solid #8b9097;overflow:hidden"><div class="t" style="left:3.2px;top:18.2px;font-size:15px;color:#fff;-webkit-text-stroke:0.2px #2e6cb4;transform:scaleX(1.17)">Müller</div></div>
<div class="a" style="left:1197.8px;top:585.2px;width:40.8px;height:53px;background:#2e6cb4;border-left:3.4px solid #8b9097;overflow:hidden"><div class="t" style="left:3.2px;top:18.2px;font-size:15px;color:#fff;-webkit-text-stroke:0.2px #2e6cb4;transform:scaleX(1.17)">Hoffmann</div></div>
<div class="a" style="left:1243.0px;top:585.2px;width:31.6px;height:53px;background:#2e6cb4;border-left:3.4px solid #8b9097;overflow:hidden"><div class="t" style="left:3.2px;top:18.2px;font-size:15px;color:#fff;-webkit-text-stroke:0.2px #2e6cb4;transform:scaleX(1.17)">Wagner</div></div>
<div class="a" style="left:1276.5px;top:585.2px;width:32.1px;height:53px;background:#2e6cb4;border-left:3.4px solid #8b9097;overflow:hidden"><div class="t" style="left:3.2px;top:18.2px;font-size:15px;color:#fff;-webkit-text-stroke:0.2px #2e6cb4;transform:scaleX(1.17)">Wagner</div></div>
<div class="a" style="left:1307.9px;top:585.2px;width:32.8px;height:53px;background:#2e6cb4;border-left:3.4px solid #8b9097;overflow:hidden"><div class="t" style="left:3.2px;top:18.2px;font-size:15px;color:#fff;-webkit-text-stroke:0.2px #2e6cb4;transform:scaleX(1.17)">Weber</div></div>
<div class="a" style="left:1340.0px;top:585.2px;width:39.2px;height:53px;background:#2e6cb4;border-left:3.4px solid #8b9097;overflow:hidden"><div class="t" style="left:3.2px;top:18.2px;font-size:15px;color:#fff;-webkit-text-stroke:0.2px #2e6cb4;transform:scaleX(1.17)">Hoffmann</div></div>
<div class="a" style="left:1382.0px;top:585.2px;width:40.3px;height:53px;background:#2e6cb4;border-left:3.4px solid #8b9097;overflow:hidden"><div class="t" style="left:3.2px;top:18.2px;font-size:15px;color:#fff;-webkit-text-stroke:0.2px #2e6cb4;transform:scaleX(1.17)">Becker</div></div>
<div class="a" style="left:1422.4px;top:585.2px;width:32.8px;height:53px;background:#2e6cb4;border-left:3.4px solid #8b9097;overflow:hidden"><div class="t" style="left:3.2px;top:18.2px;font-size:15px;color:#fff;-webkit-text-stroke:0.2px #2e6cb4;transform:scaleX(1.17)">Müller</div></div>
<div class="a" style="left:1454.5px;top:585.2px;width:40.3px;height:53px;background:#2e6cb4;border-left:3.4px solid #8b9097;overflow:hidden"><div class="t" style="left:3.2px;top:18.2px;font-size:15px;color:#fff;-webkit-text-stroke:0.2px #2e6cb4;transform:scaleX(1.17)">Schröder</div></div>
<div class="a" style="left:1502.3px;top:585.2px;width:39.8px;height:53px;background:#2e6cb4;border-left:3.4px solid #8b9097;overflow:hidden"><div class="t" style="left:3.2px;top:18.2px;font-size:15px;color:#fff;-webkit-text-stroke:0.2px #2e6cb4;transform:scaleX(1.17)">Schröder</div></div>
<div class="a" style="left:1545.3px;top:585.2px;width:33.5px;height:53px;background:#2e6cb4;border-left:3.4px solid #8b9097;overflow:hidden"><div class="t" style="left:3.2px;top:18.2px;font-size:15px;color:#fff;-webkit-text-stroke:0.2px #2e6cb4;transform:scaleX(1.17)">Schmidt</div></div>
<div class="a" style="left:1578.1px;top:585.2px;width:40.5px;height:53px;background:#2e6cb4;border-left:3.4px solid #8b9097;overflow:hidden"><div class="t" style="left:3.2px;top:18.2px;font-size:15px;color:#fff;-webkit-text-stroke:0.2px #2e6cb4;transform:scaleX(1.17)">Wagner</div></div>
<div class="a" style="left:869.9px;top:597.4px;width:28.6px;height:28.6px;border-radius:50%;background:#2e6cb4;box-shadow:0 0 0 1px #dce8f6"></div>
<svg class="a" style="left:877.2px;top:604.2px;" width="14" height="15" viewBox="0 0 14 15"><rect x="0.8" y="0.8" width="12.4" height="13.4" fill="none" stroke="#fff" stroke-width="1.4"/><path d="M5 11.3V4h2.5a2.1 2.1 0 0 1 0 4.2H5" fill="none" stroke="#fff" stroke-width="1.4"/></svg>
<div class="a" style="left:1625.0px;top:597.4px;width:28.6px;height:28.6px;border-radius:50%;background:#2e6cb4;box-shadow:0 0 0 1px #dce8f6"></div>
<svg class="a" style="left:1632.3px;top:604.2px;" width="14" height="15" viewBox="0 0 14 15"><rect x="0.8" y="0.8" width="12.4" height="13.4" fill="none" stroke="#fff" stroke-width="1.4"/><path d="M5 11.3V4h2.5a2.1 2.1 0 0 1 0 4.2H5" fill="none" stroke="#fff" stroke-width="1.4"/></svg>
<div class="a" style="left:884.2px;top:670.5px;width:879.5px;height:1.6px;background:#2b4d7c"></div>
<div class="a" style="left:899.5px;top:644.8px;width:39.9px;height:53px;background:#2e6cb4;border-left:3.4px solid #8b9097;overflow:hidden"><div class="t" style="left:3.2px;top:18.2px;font-size:15px;color:#fff;-webkit-text-stroke:0.2px #2e6cb4;transform:scaleX(1.17)">Schröder</div></div>
<div class="a" style="left:938.7px;top:644.8px;width:33.0px;height:53px;background:#2e6cb4;border-left:3.4px solid #8b9097;overflow:hidden"><div class="t" style="left:3.2px;top:18.2px;font-size:15px;color:#fff;-webkit-text-stroke:0.2px #2e6cb4;transform:scaleX(1.17)">Schmidt</div></div>
<div class="a" style="left:971.0px;top:644.8px;width:32.0px;height:53px;background:#2e6cb4;border-left:3.4px solid #8b9097;overflow:hidden"><div class="t" style="left:3.2px;top:18.2px;font-size:15px;color:#fff;-webkit-text-stroke:0.2px #2e6cb4;transform:scaleX(1.17)">Schmidt</div></div>
<div class="a" style="left:1002.3px;top:644.8px;width:32.8px;height:53px;background:#2e6cb4;border-left:3.4px solid #8b9097;overflow:hidden"><div class="t" style="left:3.2px;top:18.2px;font-size:15px;color:#fff;-webkit-text-stroke:0.2px #2e6cb4;transform:scaleX(1.17)">Fischer</div></div>
<div class="a" style="left:1034.4px;top:644.8px;width:32.2px;height:53px;background:#2e6cb4;border-left:3.4px solid #8b9097;overflow:hidden"><div class="t" style="left:3.2px;top:18.2px;font-size:15px;color:#fff;-webkit-text-stroke:0.2px #2e6cb4;transform:scaleX(1.17)">Meyer</div></div>
<div class="a" style="left:1071.3px;top:644.8px;width:39.2px;height:53px;background:#2e6cb4;border-left:3.4px solid #8b9097;overflow:hidden"><div class="t" style="left:3.2px;top:18.2px;font-size:15px;color:#fff;-webkit-text-stroke:0.2px #2e6cb4;transform:scaleX(1.17)">Schröder</div></div>
<div class="a" style="left:1116.4px;top:644.8px;width:32.8px;height:53px;background:#2e6cb4;border-left:3.4px solid #8b9097;overflow:hidden"><div class="t" style="left:3.2px;top:18.2px;font-size:15px;color:#fff;-webkit-text-stroke:0.2px #2e6cb4;transform:scaleX(1.17)">Müller</div></div>
<div class="a" style="left:1153.7px;top:644.8px;width:39.9px;height:53px;background:#2e6cb4;border-left:3.4px solid #8b9097;overflow:hidden"><div class="t" style="left:3.2px;top:18.2px;font-size:15px;color:#fff;-webkit-text-stroke:0.2px #2e6cb4;transform:scaleX(1.17)">Schröder</div></div>
<div class="a" style="left:1196.7px;top:644.8px;width:40.5px;height:53px;background:#2e6cb4;border-left:3.4px solid #8b9097;overflow:hidden"><div class="t" style="left:3.2px;top:18.2px;font-size:15px;color:#fff;-webkit-text-stroke:0.2px #2e6cb4;transform:scaleX(1.17)">Weber</div></div>
<div class="a" style="left:1236.5px;top:644.8px;width:41.2px;height:53px;background:#2e6cb4;border-left:3.4px solid #8b9097;overflow:hidden"><div class="t" style="left:3.2px;top:18.2px;font-size:15px;color:#fff;-webkit-text-stroke:0.2px #2e6cb4;transform:scaleX(1.17)">Meyer</div></div>
<div class="a" style="left:1278.0px;top:644.8px;width:32.5px;height:53px;background:#2e6cb4;border-left:3.4px solid #8b9097;overflow:hidden"><div class="t" style="left:3.2px;top:18.2px;font-size:15px;color:#fff;-webkit-text-stroke:0.2px #2e6cb4;transform:scaleX(1.17)">Weber</div></div>
<div class="a" style="left:1312.7px;top:644.8px;width:32.5px;height:53px;background:#2e6cb4;border-left:3.4px solid #8b9097;overflow:hidden"><div class="t" style="left:3.2px;top:18.2px;font-size:15px;color:#fff;-webkit-text-stroke:0.2px #2e6cb4;transform:scaleX(1.17)">Müller</div></div>
<div class="a" style="left:1346.2px;top:644.8px;width:33.0px;height:53px;background:#2e6cb4;border-left:3.4px solid #8b9097;overflow:hidden"><div class="t" style="left:3.2px;top:18.2px;font-size:15px;color:#fff;-webkit-text-stroke:0.2px #2e6cb4;transform:scaleX(1.17)">Meyer</div></div>
<div class="a" style="left:1378.5px;top:644.8px;width:39.9px;height:53px;background:#2e6cb4;border-left:3.4px solid #8b9097;overflow:hidden"><div class="t" style="left:3.2px;top:18.2px;font-size:15px;color:#fff;-webkit-text-stroke:0.2px #2e6cb4;transform:scaleX(1.17)">Weber</div></div>
<div class="a" style="left:1417.7px;top:644.8px;width:32.8px;height:53px;background:#2e6cb4;border-left:3.4px solid #8b9097;overflow:hidden"><div class="t" style="left:3.2px;top:18.2px;font-size:15px;color:#fff;-webkit-text-stroke:0.2px #2e6cb4;transform:scaleX(1.17)">Weber</div></div>
<div class="a" style="left:1449.8px;top:644.8px;width:32.9px;height:53px;background:#2e6cb4;border-left:3.4px solid #8b9097;overflow:hidden"><div class="t" style="left:3.2px;top:18.2px;font-size:15px;color:#fff;-webkit-text-stroke:0.2px #2e6cb4;transform:scaleX(1.17)">Weber</div></div>
<div class="a" style="left:1488.0px;top:644.8px;width:40.0px;height:53px;background:#2e6cb4;border-left:3.4px solid #8b9097;overflow:hidden"><div class="t" style="left:3.2px;top:18.2px;font-size:15px;color:#fff;-webkit-text-stroke:0.2px #2e6cb4;transform:scaleX(1.17)">Wagner</div></div>
<div class="a" style="left:1527.3px;top:644.8px;width:41.0px;height:53px;background:#2e6cb4;border-left:3.4px solid #8b9097;overflow:hidden"><div class="t" style="left:3.2px;top:18.2px;font-size:15px;color:#fff;-webkit-text-stroke:0.2px #2e6cb4;transform:scaleX(1.17)">Müller</div></div>
<div class="a" style="left:1580.3px;top:644.8px;width:40.5px;height:53px;background:#2e6cb4;border-left:3.4px solid #8b9097;overflow:hidden"><div class="t" style="left:3.2px;top:18.2px;font-size:15px;color:#fff;-webkit-text-stroke:0.2px #2e6cb4;transform:scaleX(1.17)">Meyer</div></div>
<div class="a" style="left:1630.4px;top:644.8px;width:39.9px;height:53px;background:#2e6cb4;border-left:3.4px solid #8b9097;overflow:hidden"><div class="t" style="left:3.2px;top:18.2px;font-size:15px;color:#fff;-webkit-text-stroke:0.2px #2e6cb4;transform:scaleX(1.17)">Becker</div></div>
<div class="a" style="left:1669.6px;top:644.8px;width:32.8px;height:53px;background:#2e6cb4;border-left:3.4px solid #8b9097;overflow:hidden"><div class="t" style="left:3.2px;top:18.2px;font-size:15px;color:#fff;-webkit-text-stroke:0.2px #2e6cb4;transform:scaleX(1.17)">Weber</div></div>
<div class="a" style="left:1704.2px;top:644.8px;width:41.2px;height:53px;background:#2e6cb4;border-left:3.4px solid #8b9097;overflow:hidden"><div class="t" style="left:3.2px;top:18.2px;font-size:15px;color:#fff;-webkit-text-stroke:0.2px #2e6cb4;transform:scaleX(1.17)">Hoffmann</div></div>
<div class="a" style="left:869.9px;top:657.0px;width:28.6px;height:28.6px;border-radius:50%;background:#2e6cb4;box-shadow:0 0 0 1px #dce8f6"></div>
<svg class="a" style="left:877.2px;top:663.8px;" width="14" height="15" viewBox="0 0 14 15"><rect x="0.8" y="0.8" width="12.4" height="13.4" fill="none" stroke="#fff" stroke-width="1.4"/><path d="M5 11.3V4h2.5a2.1 2.1 0 0 1 0 4.2H5" fill="none" stroke="#fff" stroke-width="1.4"/></svg>
<div class="a" style="left:1749.4px;top:657.0px;width:28.6px;height:28.6px;border-radius:50%;background:#2e6cb4;box-shadow:0 0 0 1px #dce8f6"></div>
<svg class="a" style="left:1756.7px;top:663.8px;" width="14" height="15" viewBox="0 0 14 15"><rect x="0.8" y="0.8" width="12.4" height="13.4" fill="none" stroke="#fff" stroke-width="1.4"/><path d="M5 11.3V4h2.5a2.1 2.1 0 0 1 0 4.2H5" fill="none" stroke="#fff" stroke-width="1.4"/></svg>
<div class="a" style="left:884.4px;top:730.2px;width:718.1px;height:1.6px;background:#2b4d7c"></div>
<div class="a" style="left:900.1px;top:704.5px;width:32.5px;height:53px;background:#2e6cb4;border-left:3.4px solid #8b9097;overflow:hidden"><div class="t" style="left:3.2px;top:18.2px;font-size:15px;color:#fff;-webkit-text-stroke:0.2px #2e6cb4;transform:scaleX(1.17)">Schmidt</div></div>
<div class="a" style="left:942.2px;top:704.5px;width:31.5px;height:53px;background:#2e6cb4;border-left:3.4px solid #8b9097;overflow:hidden"><div class="t" style="left:3.2px;top:18.2px;font-size:15px;color:#fff;-webkit-text-stroke:0.2px #2e6cb4;transform:scaleX(1.17)">Meyer</div></div>
<div class="a" style="left:973.0px;top:704.5px;width:32.9px;height:53px;background:#2e6cb4;border-left:3.4px solid #8b9097;overflow:hidden"><div class="t" style="left:3.2px;top:18.2px;font-size:15px;color:#fff;-webkit-text-stroke:0.2px #2e6cb4;transform:scaleX(1.17)">Schmidt</div></div>
<div class="a" style="left:1005.2px;top:704.5px;width:33.4px;height:53px;background:#2e6cb4;border-left:3.4px solid #8b9097;overflow:hidden"><div class="t" style="left:3.2px;top:18.2px;font-size:15px;color:#fff;-webkit-text-stroke:0.2px #2e6cb4;transform:scaleX(1.17)">Hoffmann</div></div>
<div class="a" style="left:1037.9px;top:704.5px;width:31.6px;height:53px;background:#2e6cb4;border-left:3.4px solid #8b9097;overflow:hidden"><div class="t" style="left:3.2px;top:18.2px;font-size:15px;color:#fff;-webkit-text-stroke:0.2px #2e6cb4;transform:scaleX(1.17)">Schmidt</div></div>
<div class="a" style="left:1071.3px;top:704.5px;width:30.9px;height:53px;background:#2e6cb4;border-left:3.4px solid #8b9097;overflow:hidden"><div class="t" style="left:3.2px;top:18.2px;font-size:15px;color:#fff;-webkit-text-stroke:0.2px #2e6cb4;transform:scaleX(1.17)">Müller</div></div>
<div class="a" style="left:1107.2px;top:704.5px;width:32.2px;height:53px;background:#2e6cb4;border-left:3.4px solid #8b9097;overflow:hidden"><div class="t" style="left:3.2px;top:18.2px;font-size:15px;color:#fff;-webkit-text-stroke:0.2px #2e6cb4;transform:scaleX(1.17)">Schmidt</div></div>
<div class="a" style="left:1150.2px;top:704.5px;width:40.6px;height:53px;background:#2e6cb4;border-left:3.4px solid #8b9097;overflow:hidden"><div class="t" style="left:3.2px;top:18.2px;font-size:15px;color:#fff;-webkit-text-stroke:0.2px #2e6cb4;transform:scaleX(1.17)">Fischer</div></div>
<div class="a" style="left:1192.0px;top:704.5px;width:39.2px;height:53px;background:#2e6cb4;border-left:3.4px solid #8b9097;overflow:hidden"><div class="t" style="left:3.2px;top:18.2px;font-size:15px;color:#fff;-webkit-text-stroke:0.2px #2e6cb4;transform:scaleX(1.17)">Fischer</div></div>
<div class="a" style="left:1233.7px;top:704.5px;width:40.6px;height:53px;background:#2e6cb4;border-left:3.4px solid #8b9097;overflow:hidden"><div class="t" style="left:3.2px;top:18.2px;font-size:15px;color:#fff;-webkit-text-stroke:0.2px #2e6cb4;transform:scaleX(1.17)">Becker</div></div>
<div class="a" style="left:1273.6px;top:704.5px;width:39.3px;height:53px;background:#2e6cb4;border-left:3.4px solid #8b9097;overflow:hidden"><div class="t" style="left:3.2px;top:18.2px;font-size:15px;color:#fff;-webkit-text-stroke:0.2px #2e6cb4;transform:scaleX(1.17)">Müller</div></div>
<div class="a" style="left:1312.2px;top:704.5px;width:41.9px;height:53px;background:#2e6cb4;border-left:3.4px solid #8b9097;overflow:hidden"><div class="t" style="left:3.2px;top:18.2px;font-size:15px;color:#fff;-webkit-text-stroke:0.2px #2e6cb4;transform:scaleX(1.17)">Hoffmann</div></div>
<div class="a" style="left:1353.4px;top:704.5px;width:39.2px;height:53px;background:#2e6cb4;border-left:3.4px solid #8b9097;overflow:hidden"><div class="t" style="left:3.2px;top:18.2px;font-size:15px;color:#fff;-webkit-text-stroke:0.2px #2e6cb4;transform:scaleX(1.17)">Schröder</div></div>
<div class="a" style="left:1401.4px;top:704.5px;width:31.2px;height:53px;background:#2e6cb4;border-left:3.4px solid #8b9097;overflow:hidden"><div class="t" style="left:3.2px;top:18.2px;font-size:15px;color:#fff;-webkit-text-stroke:0.2px #2e6cb4;transform:scaleX(1.17)">Schmidt</div></div>
<div class="a" style="left:1434.5px;top:704.5px;width:31.0px;height:53px;background:#2e6cb4;border-left:3.4px solid #8b9097;overflow:hidden"><div class="t" style="left:3.2px;top:18.2px;font-size:15px;color:#fff;-webkit-text-stroke:0.2px #2e6cb4;transform:scaleX(1.17)">Schmidt</div></div>
<div class="a" style="left:1470.4px;top:704.5px;width:32.4px;height:53px;background:#2e6cb4;border-left:3.4px solid #8b9097;overflow:hidden"><div class="t" style="left:3.2px;top:18.2px;font-size:15px;color:#fff;-webkit-text-stroke:0.2px #2e6cb4;transform:scaleX(1.17)">Fischer</div></div>
<div class="a" style="left:1503.5px;top:704.5px;width:41.4px;height:53px;background:#2e6cb4;border-left:3.4px solid #8b9097;overflow:hidden"><div class="t" style="left:3.2px;top:18.2px;font-size:15px;color:#fff;-webkit-text-stroke:0.2px #2e6cb4;transform:scaleX(1.17)">Meyer</div></div>
<div class="a" style="left:1544.2px;top:704.5px;width:41.4px;height:53px;background:#2e6cb4;border-left:3.4px solid #8b9097;overflow:hidden"><div class="t" style="left:3.2px;top:18.2px;font-size:15px;color:#fff;-webkit-text-stroke:0.2px #2e6cb4;transform:scaleX(1.17)">Schröder</div></div>
<div class="a" style="left:870.1px;top:716.7px;width:28.6px;height:28.6px;border-radius:50%;background:#2e6cb4;box-shadow:0 0 0 1px #dce8f6"></div>
<svg class="a" style="left:877.4px;top:723.5px;" width="14" height="15" viewBox="0 0 14 15"><rect x="0.8" y="0.8" width="12.4" height="13.4" fill="none" stroke="#fff" stroke-width="1.4"/><path d="M5 11.3V4h2.5a2.1 2.1 0 0 1 0 4.2H5" fill="none" stroke="#fff" stroke-width="1.4"/></svg>
<div class="a" style="left:1588.2px;top:716.7px;width:28.6px;height:28.6px;border-radius:50%;background:#2e6cb4;box-shadow:0 0 0 1px #dce8f6"></div>
<svg class="a" style="left:1595.5px;top:723.5px;" width="14" height="15" viewBox="0 0 14 15"><rect x="0.8" y="0.8" width="12.4" height="13.4" fill="none" stroke="#fff" stroke-width="1.4"/><path d="M5 11.3V4h2.5a2.1 2.1 0 0 1 0 4.2H5" fill="none" stroke="#fff" stroke-width="1.4"/></svg>
<div class="a" style="left:861px;top:764.0px;width:971.0px;height:18px;background:#f6f6f6"></div>
<div class="a" style="left:1171.6px;top:769px;width:402.7px;height:8.8px;background:#c4c4c4;border-radius:4.4px"></div>
<div class="a" style="left:0px;top:990px;width:1946px;height:1px;background:#dcf0ed"></div>
<div class="a" style="left:0px;top:991px;width:1946px;height:1px;background:#f6fdfc"></div>
</body></html>
